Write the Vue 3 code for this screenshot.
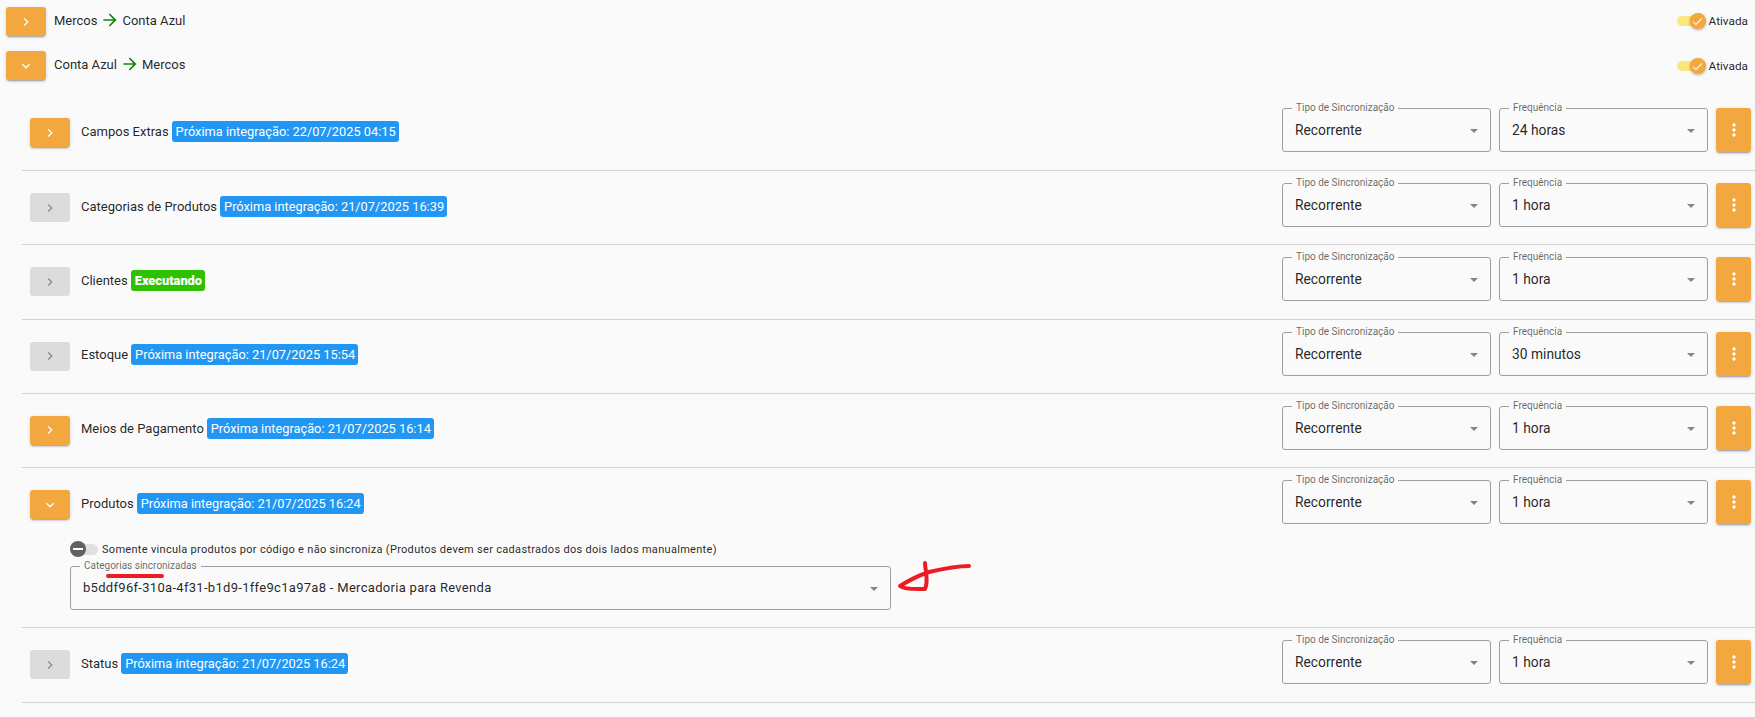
<template>
  <div class="page">
    <section v-for="flow in flows" :key="flow.from" class="flow-row" :class="{ open: flow.open }">
      <button class="btn-toggle orange">
        <svg viewBox="0 0 24 24" class="chevron"><path :d="flow.open ? chevronDown : chevronRight" /></svg>
      </button>
      <div class="flow-title">
        <span>{{ flow.from }}</span>
        <svg viewBox="0 0 24 24" class="arrow"><path d="M4 11v2h12l-5.5 5.5 1.42 1.42L19.84 12l-7.92-7.92L10.5 5.5 16 11z" /></svg>
        <span>{{ flow.to }}</span>
      </div>
      <div class="switch-wrap">
        <div class="switch">
          <span class="switch-thumb">
            <svg viewBox="0 0 24 24"><path d="M21 7 9 19l-5.5-5.5 1.41-1.41L9 16.17 19.59 5.59z" /></svg>
          </span>
        </div>
        <span>Ativada</span>
      </div>
    </section>

    <div class="list">
      <div v-for="item in items" :key="item.name" class="item">
        <div class="item-row">
          <button class="btn-toggle" :class="item.enabled ? 'orange' : 'grey'">
            <svg viewBox="0 0 24 24" class="chevron"><path :d="item.open ? chevronDown : chevronRight" /></svg>
          </button>
          <div class="item-title">
            <span>{{ item.name }}</span>
            <span class="badge" :class="{ running: item.running }">{{ item.status }}</span>
          </div>
          <div class="controls">
            <div class="select">
              <label>Tipo de Sincronização</label>
              <span>Recorrente</span>
              <i class="caret"></i>
            </div>
            <div class="select">
              <label>Frequência</label>
              <span>{{ item.freq }}</span>
              <i class="caret"></i>
            </div>
            <button class="btn-menu">
              <svg viewBox="0 0 24 24"><path d="M12 8a2 2 0 1 0 0-4 2 2 0 0 0 0 4zm0 2a2 2 0 1 0 0 4 2 2 0 0 0 0-4zm0 6a2 2 0 1 0 0 4 2 2 0 0 0 0-4z" /></svg>
            </button>
          </div>
        </div>

        <div v-if="item.open" class="item-body">
          <div class="option">
            <div class="mini-switch">
              <span class="mini-thumb"><i></i></span>
            </div>
            <span>Somente vincula produtos por código e não sincroniza (Produtos devem ser cadastrados dos dois lados manualmente)</span>
          </div>
          <div class="select wide">
            <label>Categorias sincronizadas</label>
            <span>b5ddf96f-310a-4f31-b1d9-1ffe9c1a97a8 - Mercadoria para Revenda</span>
            <i class="caret"></i>
          </div>
        </div>
      </div>
    </div>

    <!-- marcacao a mao feita sobre o print -->
    <svg class="scribble" viewBox="0 0 1755 717">
      <path d="M108 576H162" />
      <path d="M969 566 C955 566 942 569 929 572 C920 575 908 581 900 586 C905 590 918 589 925 589 C929 580 925 570 925 563" />
    </svg>
  </div>
</template>

<script setup>
const chevronRight = 'M8.6 16.6 13.2 12 8.6 7.4 10 6l6 6-6 6z'
const chevronDown = 'M7.4 8.6 12 13.2l4.6-4.6L18 10l-6 6-6-6z'

const flows = [
  { from: 'Mercos', to: 'Conta Azul', open: false },
  { from: 'Conta Azul', to: 'Mercos', open: true }
]

const items = [
  { name: 'Campos Extras', status: 'Próxima integração: 22/07/2025 04:15', freq: '24 horas', enabled: true },
  { name: 'Categorias de Produtos', status: 'Próxima integração: 21/07/2025 16:39', freq: '1 hora' },
  { name: 'Clientes', status: 'Executando', freq: '1 hora', running: true },
  { name: 'Estoque', status: 'Próxima integração: 21/07/2025 15:54', freq: '30 minutos' },
  { name: 'Meios de Pagamento', status: 'Próxima integração: 21/07/2025 16:14', freq: '1 hora', enabled: true },
  { name: 'Produtos', status: 'Próxima integração: 21/07/2025 16:24', freq: '1 hora', enabled: true, open: true },
  { name: 'Status', status: 'Próxima integração: 21/07/2025 16:24', freq: '1 hora' }
]
</script>

<style>
html, body {
  background: #fafafa;
}
</style>

<style scoped>
.page {
  position: relative;
  height: 717px;
  overflow: hidden;
  background: #fafafa;
  padding: 7px 0 0 6px;
  box-sizing: border-box;
  font-family: Roboto, "Liberation Sans", sans-serif;
  font-size: 13px;
  color: rgba(0, 0, 0, 0.87);
}
.flow-row {
  display: flex;
  align-items: flex-start;
  height: 44px;
  padding-right: 7px;
}
.flow-row.open {
  height: 45px;
}
.flow-title {
  display: flex;
  align-items: center;
  margin-left: 8px;
  height: 24px;
  margin-top: 1px;
}
.arrow {
  width: 20px;
  height: 20px;
  margin: 0 2px 0 3px;
  fill: #0a8a0a;
}
.switch-wrap {
  display: flex;
  align-items: center;
  margin-left: auto;
  margin-top: 3px;
  height: 22px;
  font-size: 11.8px;
}
.open .switch-wrap {
  margin-top: 4px;
}
.switch {
  position: relative;
  width: 26px;
  height: 10px;
  margin-right: 6px;
  border-radius: 5px;
  background: #fbe87c;
}
.switch-thumb {
  position: absolute;
  top: -3px;
  right: -3px;
  width: 16px;
  height: 16px;
  border-radius: 50%;
  background: #f2a73f;
  box-shadow: 0 1px 3px rgba(0, 0, 0, 0.3);
  display: flex;
  align-items: center;
  justify-content: center;
}
.switch-thumb svg {
  width: 13px;
  height: 13px;
  fill: #fff;
}
.btn-toggle {
  flex: none;
  width: 40px;
  height: 29px;
  padding: 0;
  border: none;
  border-radius: 3px;
  display: flex;
  align-items: center;
  justify-content: center;
}
.btn-toggle.orange {
  background: #f2a73f;
  box-shadow: 0 2px 2px -1px rgba(0, 0, 0, 0.35), 0 1px 4px rgba(0, 0, 0, 0.12);
}
.btn-toggle.grey {
  background: #dcdcdc;
}
.chevron {
  width: 16px;
  height: 16px;
  fill: #fff;
}
.grey .chevron {
  fill: #8a8a8a;
}
.list {
  margin-left: 16px;
}
.item {
  border-bottom: 1px solid #d3d3d3;
}
.item-row {
  display: flex;
  align-items: flex-start;
  padding: 12px 4px 17.25px 8px;
}
.item:first-child .item-row {
  padding-bottom: 18px;
}
.item-row .btn-toggle {
  margin-top: 10px;
}
.item-title {
  display: flex;
  align-items: center;
  gap: 3px;
  margin: 11px 0 0 11px;
  height: 24px;
}
.badge {
  display: inline-block;
  height: 21px;
  line-height: 21px;
  padding: 0 3px 0 4px;
  border-radius: 3px;
  background: #2196f3;
  color: #fff;
  font-size: 12.8px;
}
.badge.running {
  background: #2dc100;
  font-weight: 900;
}
.controls {
  display: flex;
  gap: 8px;
  margin-left: auto;
}
.select {
  position: relative;
  box-sizing: border-box;
  width: 209px;
  height: 44px;
  padding: 0 12px;
  border: 1px solid #9e9e9e;
  border-radius: 3px;
  display: flex;
  align-items: center;
  font-size: 13.8px;
}
.select label {
  position: absolute;
  top: -7px;
  left: 9px;
  padding: 0 4px;
  background: #fafafa;
  font-size: 10px;
  line-height: 11px;
  color: rgba(0, 0, 0, 0.6);
}
.caret {
  position: absolute;
  right: 12px;
  top: 20px;
  border-left: 4px solid transparent;
  border-right: 4px solid transparent;
  border-top: 4px solid #858585;
}
.btn-menu {
  width: 35px;
  height: 44px;
  padding: 0;
  border: none;
  border-radius: 3px;
  background: #f2a73f;
  box-shadow: 0 2px 2px -1px rgba(0, 0, 0, 0.35), 0 1px 4px rgba(0, 0, 0, 0.12);
  display: flex;
  align-items: center;
  justify-content: center;
}
.btn-menu svg {
  width: 20px;
  height: 20px;
  fill: #fff;
}
.item-body {
  margin-top: -2px;
  padding: 0 0 17px 48px;
}
.option {
  display: flex;
  align-items: center;
  height: 20px;
  font-size: 11px;
  letter-spacing: 0.3px;
}
.mini-switch {
  position: relative;
  width: 28px;
  height: 11px;
  margin-right: 4px;
  border-radius: 6px;
  background: #e0e0e0;
}
.mini-thumb {
  position: absolute;
  left: 0;
  top: -2.5px;
  width: 16px;
  height: 16px;
  border-radius: 50%;
  background: #616161;
  display: flex;
  align-items: center;
  justify-content: center;
}
.mini-thumb i {
  width: 10px;
  height: 2px;
  background: #fff;
}
.select.wide {
  width: 821px;
  margin-top: 7px;
}
.select.wide > span {
  font-size: 13px;
  letter-spacing: 0.3px;
  margin-bottom: 2px;
}
.scribble {
  position: absolute;
  inset: 0;
  width: 1755px;
  height: 717px;
  pointer-events: none;
  fill: none;
  stroke: #ed1c24;
  stroke-width: 4;
  stroke-linecap: round;
  stroke-linejoin: round;
}
</style>
